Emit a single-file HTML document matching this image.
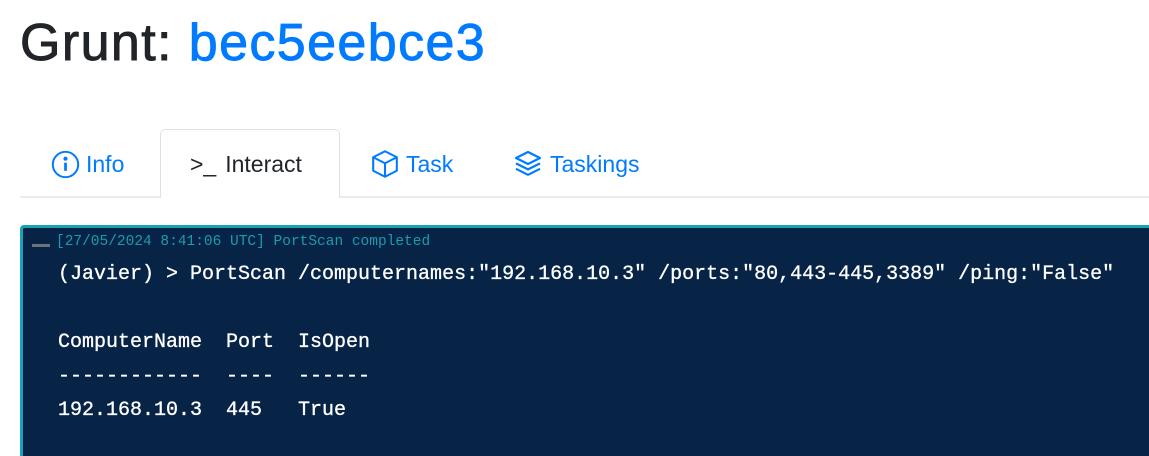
<!DOCTYPE html>
<html><head><meta charset="utf-8"><style>
body{margin:0;width:1149px;height:456px;overflow:hidden;background:#fff;font-family:"Liberation Sans",sans-serif;}
h1{position:absolute;left:20px;top:11px;margin:0;font-size:52px;font-weight:normal;color:#212529;line-height:64px;letter-spacing:1.4px;-webkit-text-stroke:0.9px currentColor}
h1 span{color:#007bff}
.nav{position:absolute;left:20px;right:0;top:196px;border-top:2px solid #e9ecef}
.tab{position:absolute;top:140px;font-size:23px;color:#007bff;display:flex;align-items:center;gap:6px;height:48px}
.active{position:absolute;left:160px;top:129px;width:178px;height:68px;border:1px solid #dee2e6;border-bottom:none;border-radius:5px 5px 0 0;background:#fff}
.term{position:absolute;left:20px;top:225px;right:0;bottom:0;background:#072447;border-top:3px solid #17a2b8;border-left:3px solid #17a2b8;border-radius:4px 0 0 0}
.mono{font-family:"Liberation Mono",monospace;position:absolute;white-space:pre}
.ts{left:33px;top:6px;font-size:14.5px;color:#1a9bb0}
.dash{position:absolute;left:9px;top:16px;width:18px;height:3px;background:#6c757d}
.ln{left:35px;font-size:20px;color:#fff;line-height:34px;-webkit-text-stroke:0.3px #fff}
</style></head><body>
<h1>Grunt: <span>bec5eebce3</span></h1>
<div class="nav"></div>
<div class="active"></div>
<div class="tab" style="left:51px"><svg width="29" height="29" viewBox="0 0 16 16" fill="none" stroke="#007bff" stroke-width="1.1"><circle cx="8" cy="8" r="7"/><line x1="8" y1="7" x2="8" y2="11.5" stroke-width="1.5"/><circle cx="8" cy="4.8" r=".6" fill="#007bff"/></svg><span>Info</span></div>
<div class="tab" style="left:190px;color:#212529"><span style="font-size:23px">&gt;_</span><span style="margin-left:3px">Interact</span></div>
<div class="tab" style="left:370px"><svg width="30" height="30" viewBox="0 0 16 16" fill="none" stroke="#007bff" stroke-width="1.1" stroke-linejoin="round"><path d="M8 1.2 14.3 4.4V11.6L8 14.8 1.7 11.6V4.4Z M1.7 4.4 8 7.6 14.3 4.4 M8 7.6V14.8"/></svg><span>Task</span></div>
<div class="tab" style="left:512px"><svg width="32" height="32" viewBox="0 0 16 16" fill="none" stroke="#007bff" stroke-width="1.1" stroke-linejoin="round"><path d="M8 2 14 5 8 8 2 5Z M2 7.7 8 10.7 14 7.7 M2 10.4 8 13.4 14 10.4"/></svg><span>Taskings</span></div>
<div class="term">
<div class="dash"></div>
<div class="mono ts">[27/05/2024 8:41:06 UTC] PortScan completed</div>
<div class="mono ln" style="top:30px">(Javier) &gt; PortScan /computernames:"192.168.10.3" /ports:"80,443-445,3389" /ping:"False"</div>
<div class="mono ln" style="top:98px">ComputerName  Port  IsOpen</div>
<div class="mono ln" style="top:132px">------------  ----  ------</div>
<div class="mono ln" style="top:166px">192.168.10.3  445   True</div>
</div>
</body></html>
